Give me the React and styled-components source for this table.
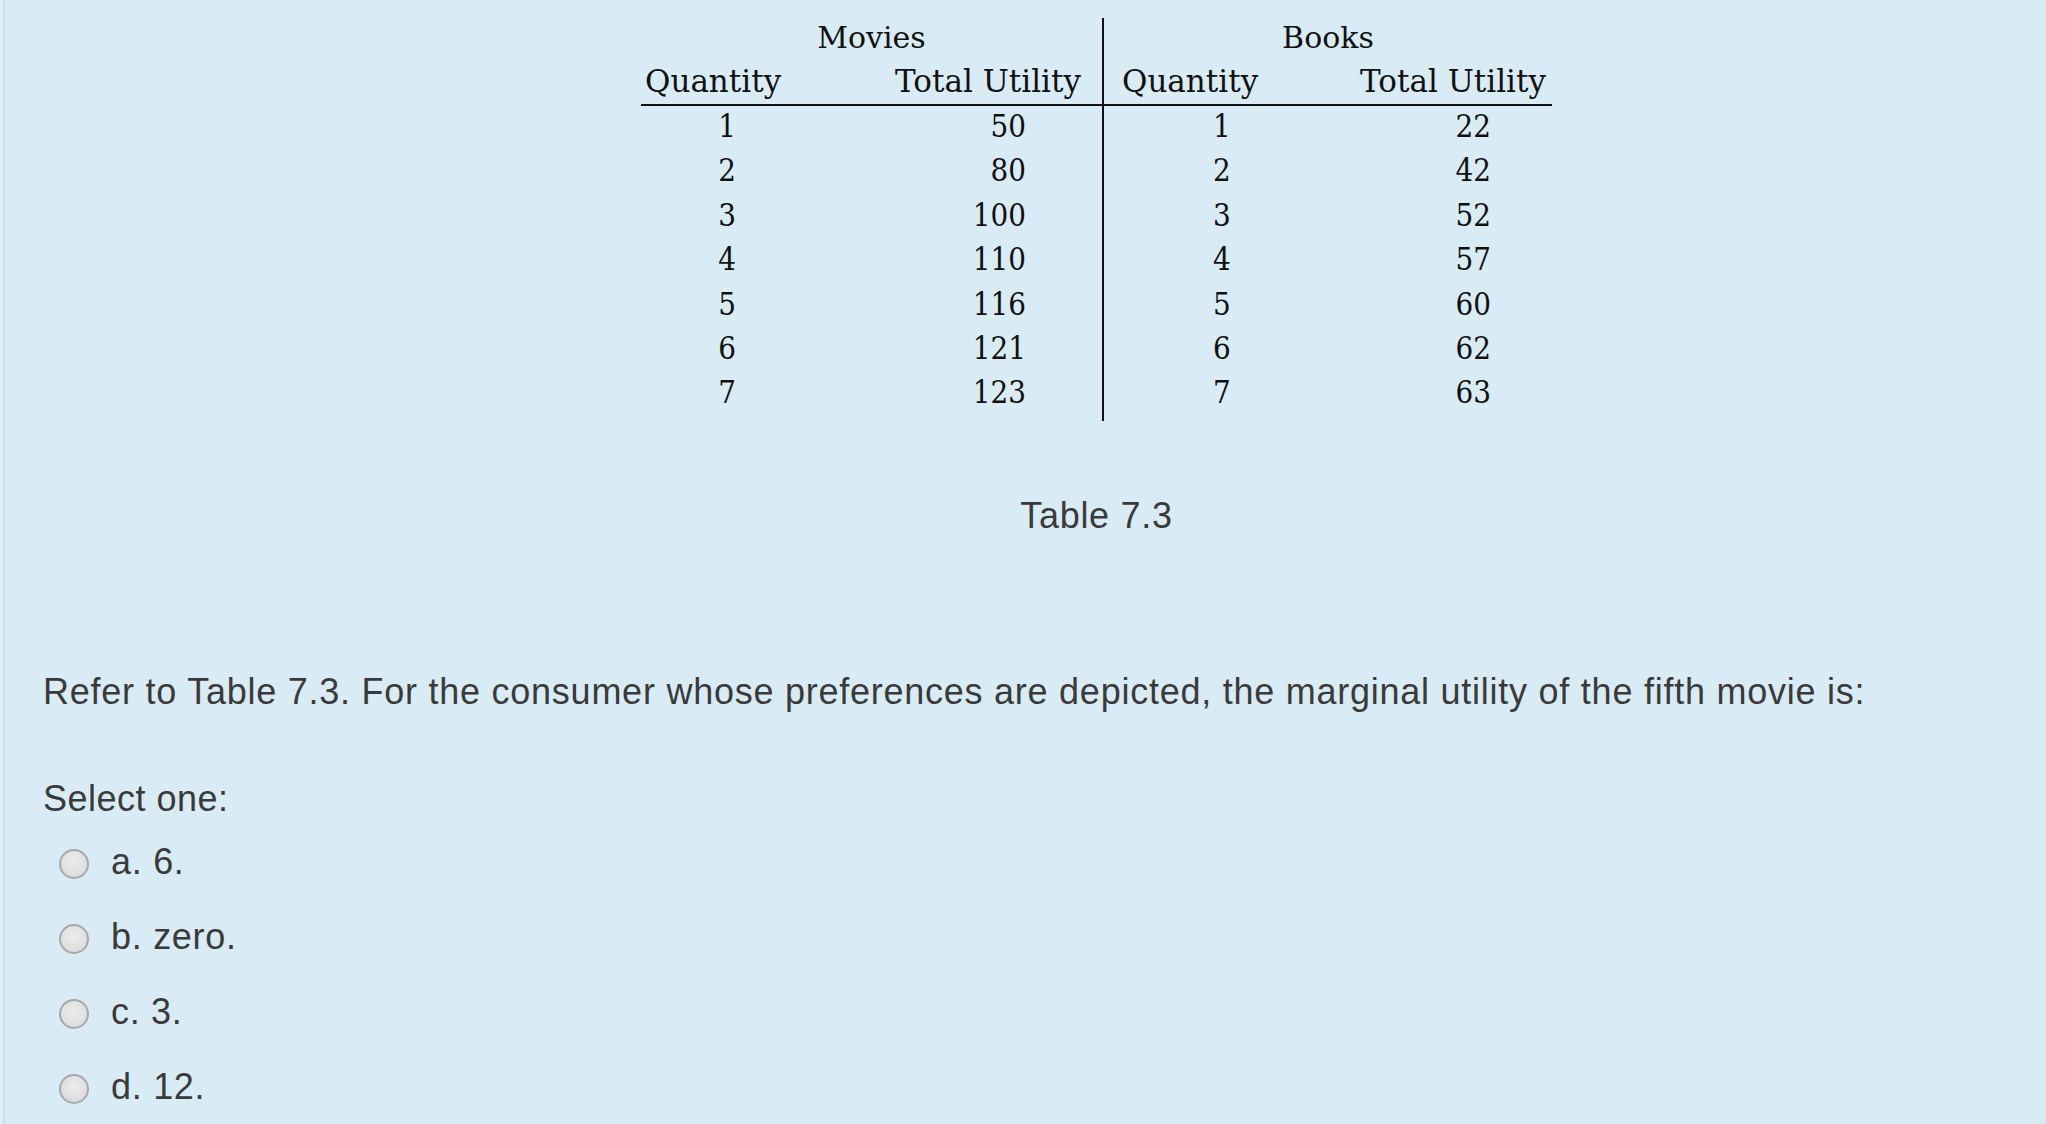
import React from "react";
import styled, { createGlobalStyle } from "styled-components";

const GlobalStyle = createGlobalStyle`
  html, body {
    margin: 0;
    padding: 0;
    background: #dfeff6;
    overflow: hidden;
  }
`;

const movies = [50, 80, 100, 110, 116, 121, 123];
const books = [22, 42, 52, 57, 60, 62, 63];

const Page = styled.div`
  margin-left: 3px;
  min-height: 1124px;
  box-sizing: border-box;
  border-left: 2px solid #c3e5ee;
  background: #d9ecf5;
  padding: 18px 0 0 38px;
  font-family: "Liberation Sans", Arial, sans-serif;
  color: #3a3a3a;
`;

const Figure = styled.div`
  padding-left: 598px;
  display: flex;
  flex-direction: column;
  align-items: flex-start;
`;

const Table = styled.div`
  display: flex;
  width: 911px;
  font-family: "DejaVu Serif", serif;
  color: #111;
`;

const Side = styled.div`
  width: ${(p) => p.width}px;
  border-left: ${(p) => (p.divided ? "2px solid #111" : "none")};
  padding-bottom: 4px;
`;

const Title = styled.div`
  text-align: center;
  font-size: 30px;
  line-height: 40px;
  height: 40px;
`;

const HeadRow = styled.div`
  display: flex;
  justify-content: space-between;
  font-size: 31px;
  line-height: 46px;
  height: 46px;
  border-bottom: 2px solid #111;
  padding: 0 ${(p) => p.right}px 0 ${(p) => p.left}px;
  margin-left: ${(p) => (p.divided ? "-2px" : "0")};
`;

const DataRow = styled.div`
  display: flex;
  font-family: "DejaVu Serif Condensed", "DejaVu Serif", serif;
  font-stretch: condensed;
  font-size: 31px;
  height: 44.4px;
  line-height: 40px;
`;

const QtyCell = styled.div`
  width: ${(p) => p.center * 2}px;
  text-align: center;
`;

const TotalCell = styled.div`
  flex: 1;
  text-align: right;
  padding-right: ${(p) => p.pad}px;
`;

const Caption = styled.div`
  width: 911px;
  text-align: center;
  margin-top: 73px;
  font-size: 36px;
  line-height: 43px;
  letter-spacing: 0.7px;
`;

const Question = styled.p`
  margin: 133px 0 0;
  font-size: 36px;
  line-height: 43px;
  letter-spacing: 0.75px;
`;

const Prompt = styled.div`
  margin-top: 64px;
  font-size: 36px;
  line-height: 43px;
  letter-spacing: 0.5px;
`;

const Options = styled.div`
  margin-top: 21px;
  display: flex;
  flex-direction: column;
  gap: 32px;
`;

const Option = styled.label`
  display: flex;
  align-items: center;
  height: 43px;
  font-size: 36px;
  letter-spacing: 0.7px;
`;

const Radio = styled.input.attrs({ type: "radio", name: "answer" })`
  appearance: none;
  margin: 4px 22px 0 16px;
  width: 30px;
  height: 30px;
  border-radius: 50%;
  box-sizing: border-box;
  border: 2px solid #a8a8a8;
  background: radial-gradient(circle at 50% 40%, #ececec 0%, #dedede 70%, #cfcfcf 100%);
`;

const Half = ({ name, width, divided, head, qty, pad, values }) => (
  <Side width={width} divided={divided}>
    <Title>{name}</Title>
    <HeadRow left={head[0]} right={head[1]} divided={divided}>
      <span>Quantity</span>
      <span>Total Utility</span>
    </HeadRow>
    {values.map((v, i) => (
      <DataRow key={i}>
        <QtyCell center={qty}>{i + 1}</QtyCell>
        <TotalCell pad={pad}>{v}</TotalCell>
      </DataRow>
    ))}
  </Side>
);

const App = () => {
  return (
    <Page>
      <GlobalStyle />
      <Figure>
        <Table>
          <Half name="Movies" width={462} head={[4, 21]} qty={86} pad={76} values={movies} />
          <Half name="Books" width={449} divided head={[20, 6]} qty={118} pad={61} values={books} />
        </Table>
        <Caption>Table 7.3</Caption>
      </Figure>
      <Question>
        Refer to Table 7.3. For the consumer whose preferences are depicted, the marginal utility of the fifth movie is:
      </Question>
      <Prompt>Select one:</Prompt>
      <Options>
        <Option>
          <Radio />
          a. 6.
        </Option>
        <Option>
          <Radio />
          b. zero.
        </Option>
        <Option>
          <Radio />
          c. 3.
        </Option>
        <Option>
          <Radio />
          d. 12.
        </Option>
      </Options>
    </Page>
  );
};

export default App;
